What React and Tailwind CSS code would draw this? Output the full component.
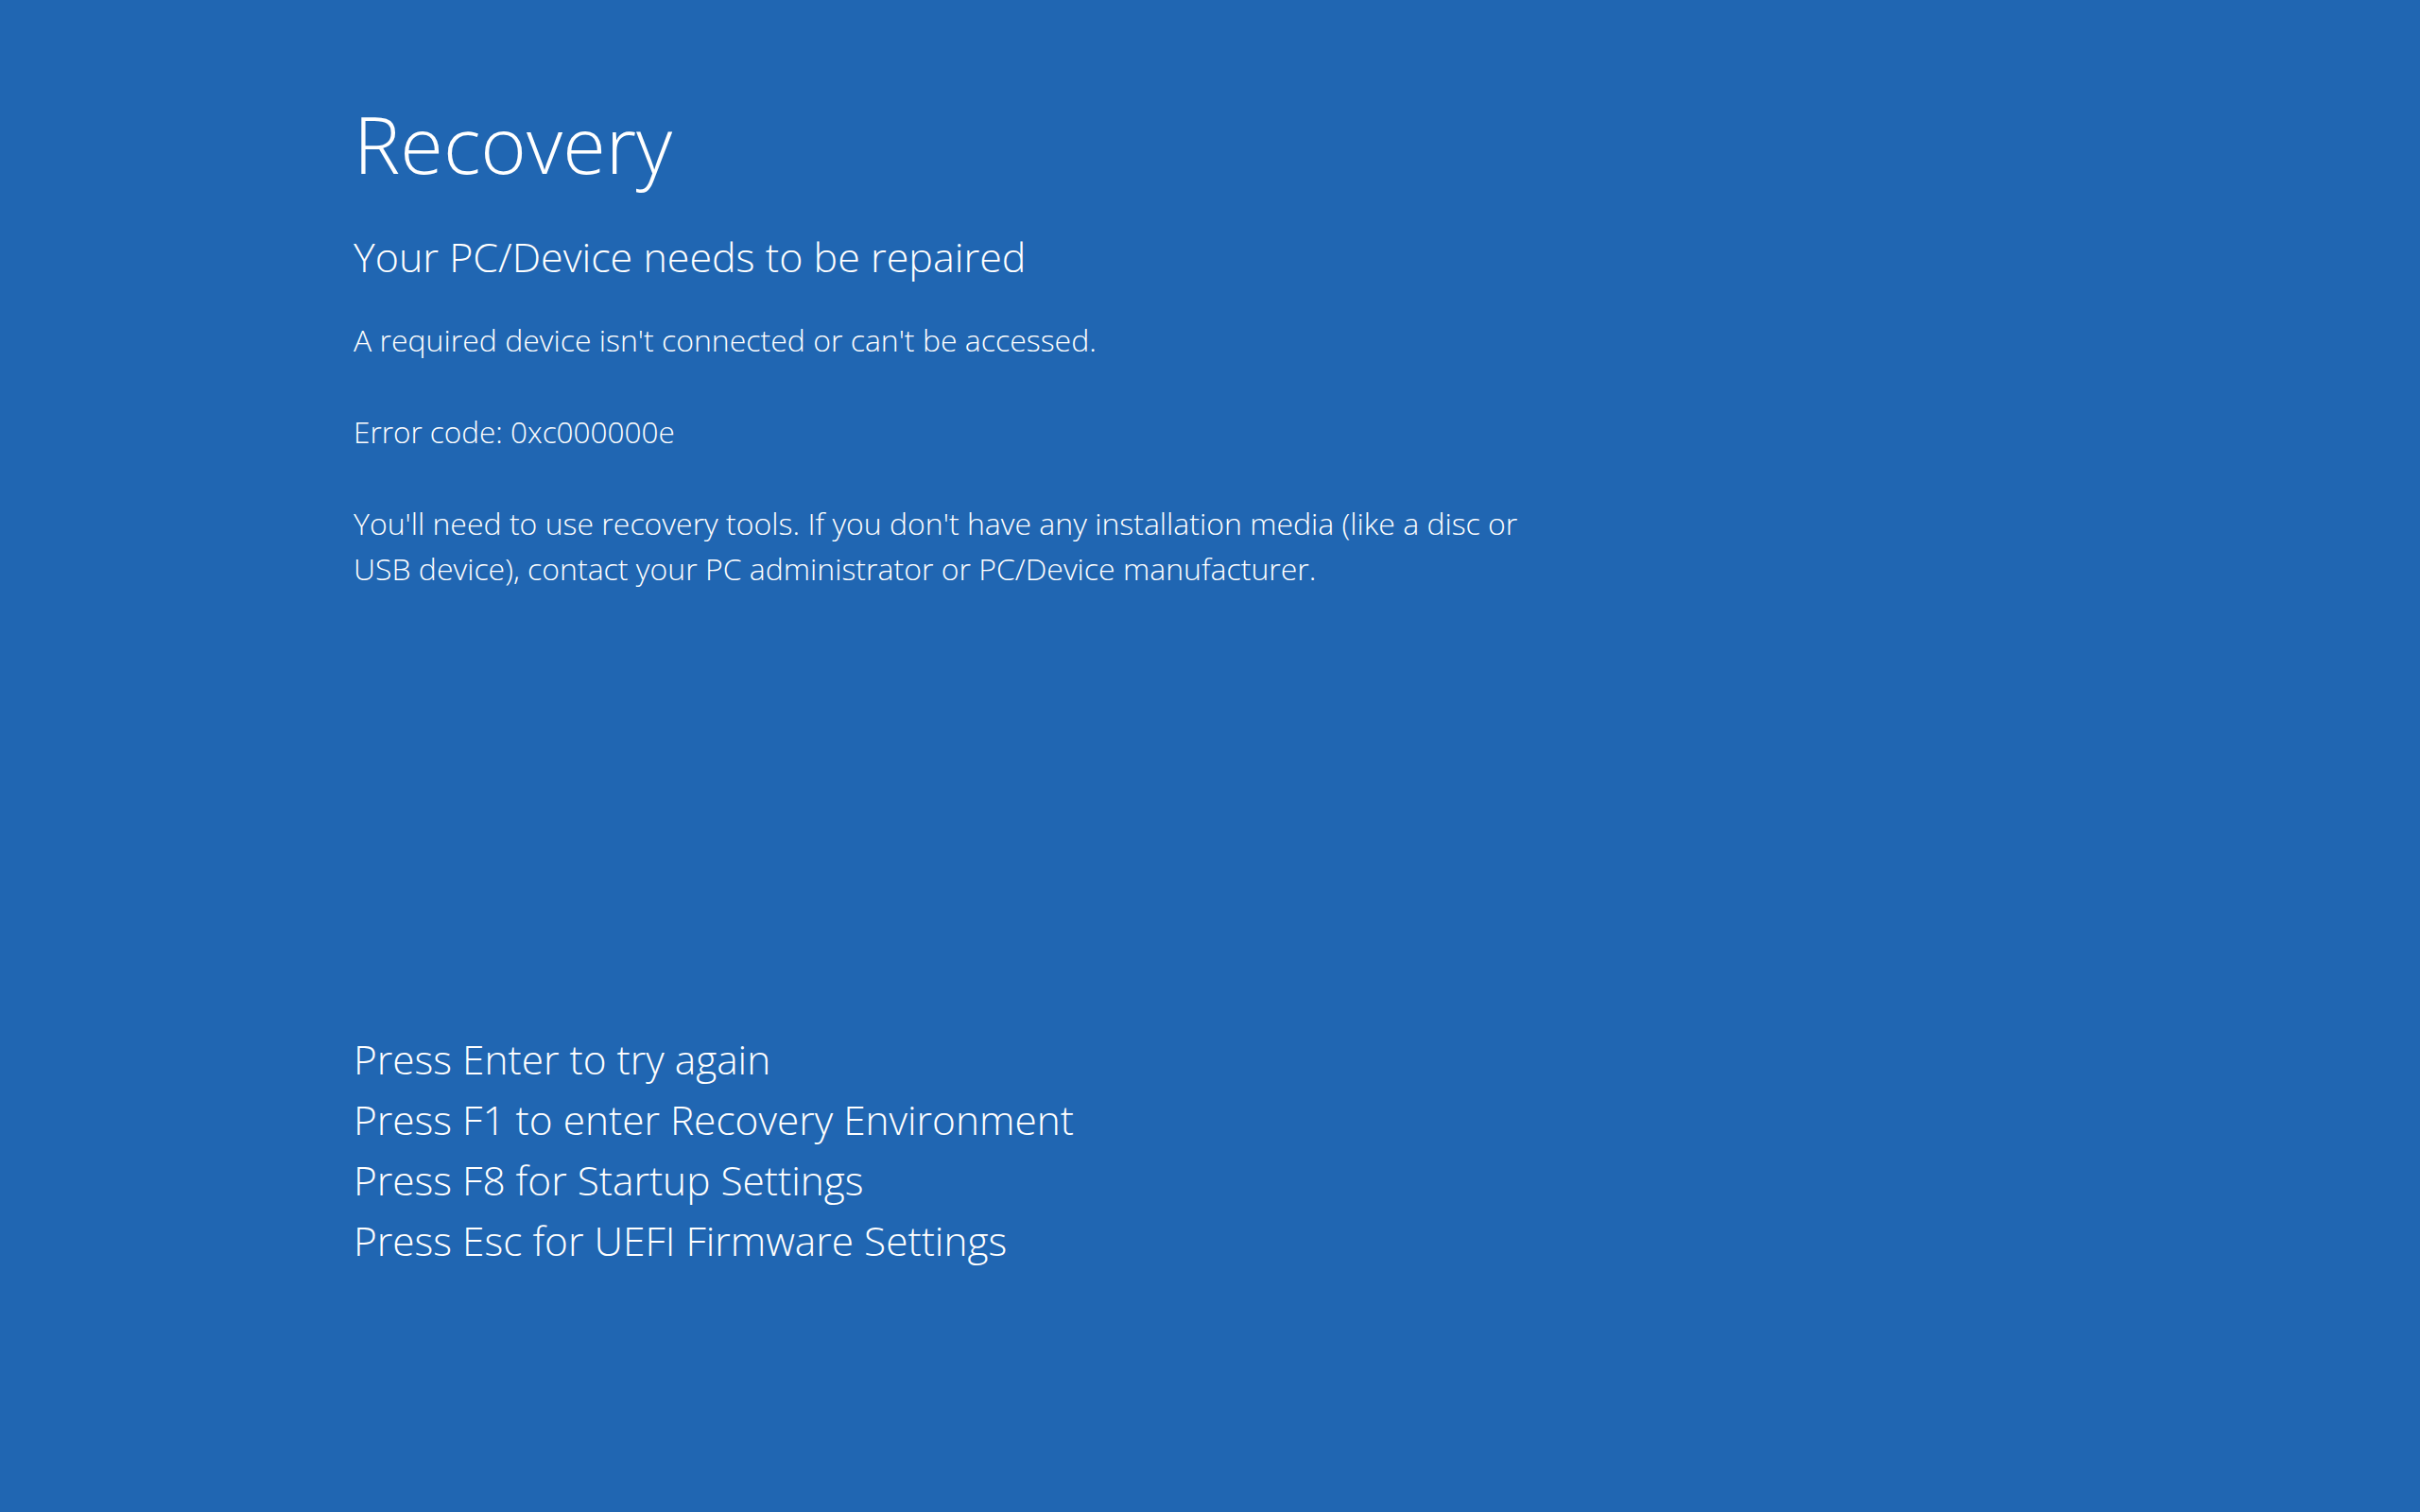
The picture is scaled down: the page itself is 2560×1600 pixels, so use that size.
export default function App() {
  return (
    <div
      className="w-[2560px] h-[1600px] bg-[#2066b2] text-white overflow-hidden"
      style={{ fontFamily: '"Open Sans", "Noto Sans", sans-serif' }}
    >
      <div className="flex flex-col pl-[374px] pt-[110px]">
        <h1 className="text-[83px] leading-none font-light">Recovery</h1>
        <h2 className="mt-[57px] text-[43px] leading-none font-light">
          Your PC/Device needs to be repaired
        </h2>
        <p className="mt-[51px] text-[32px] leading-none font-light">
          A required device isn't connected or can't be accessed.
        </p>
        <p className="mt-[65px] text-[31.5px] leading-none font-light">
          Error code: 0xc000000e
        </p>
        <p className="mt-[57px] text-[32px] leading-[48px] font-light">
          You'll need to use recovery tools. If you don't have any installation media (like a disc or
          <br />
          USB device), contact your PC administrator or PC/Device manufacturer.
        </p>
        <div className="mt-[463px] flex flex-col text-[42.4px] leading-[64px] font-light">
          <span>Press Enter to try again</span>
          <span>Press F1 to enter Recovery Environment</span>
          <span>Press F8 for Startup Settings</span>
          <span>Press Esc for UEFI Firmware Settings</span>
        </div>
      </div>
    </div>
  );
}
